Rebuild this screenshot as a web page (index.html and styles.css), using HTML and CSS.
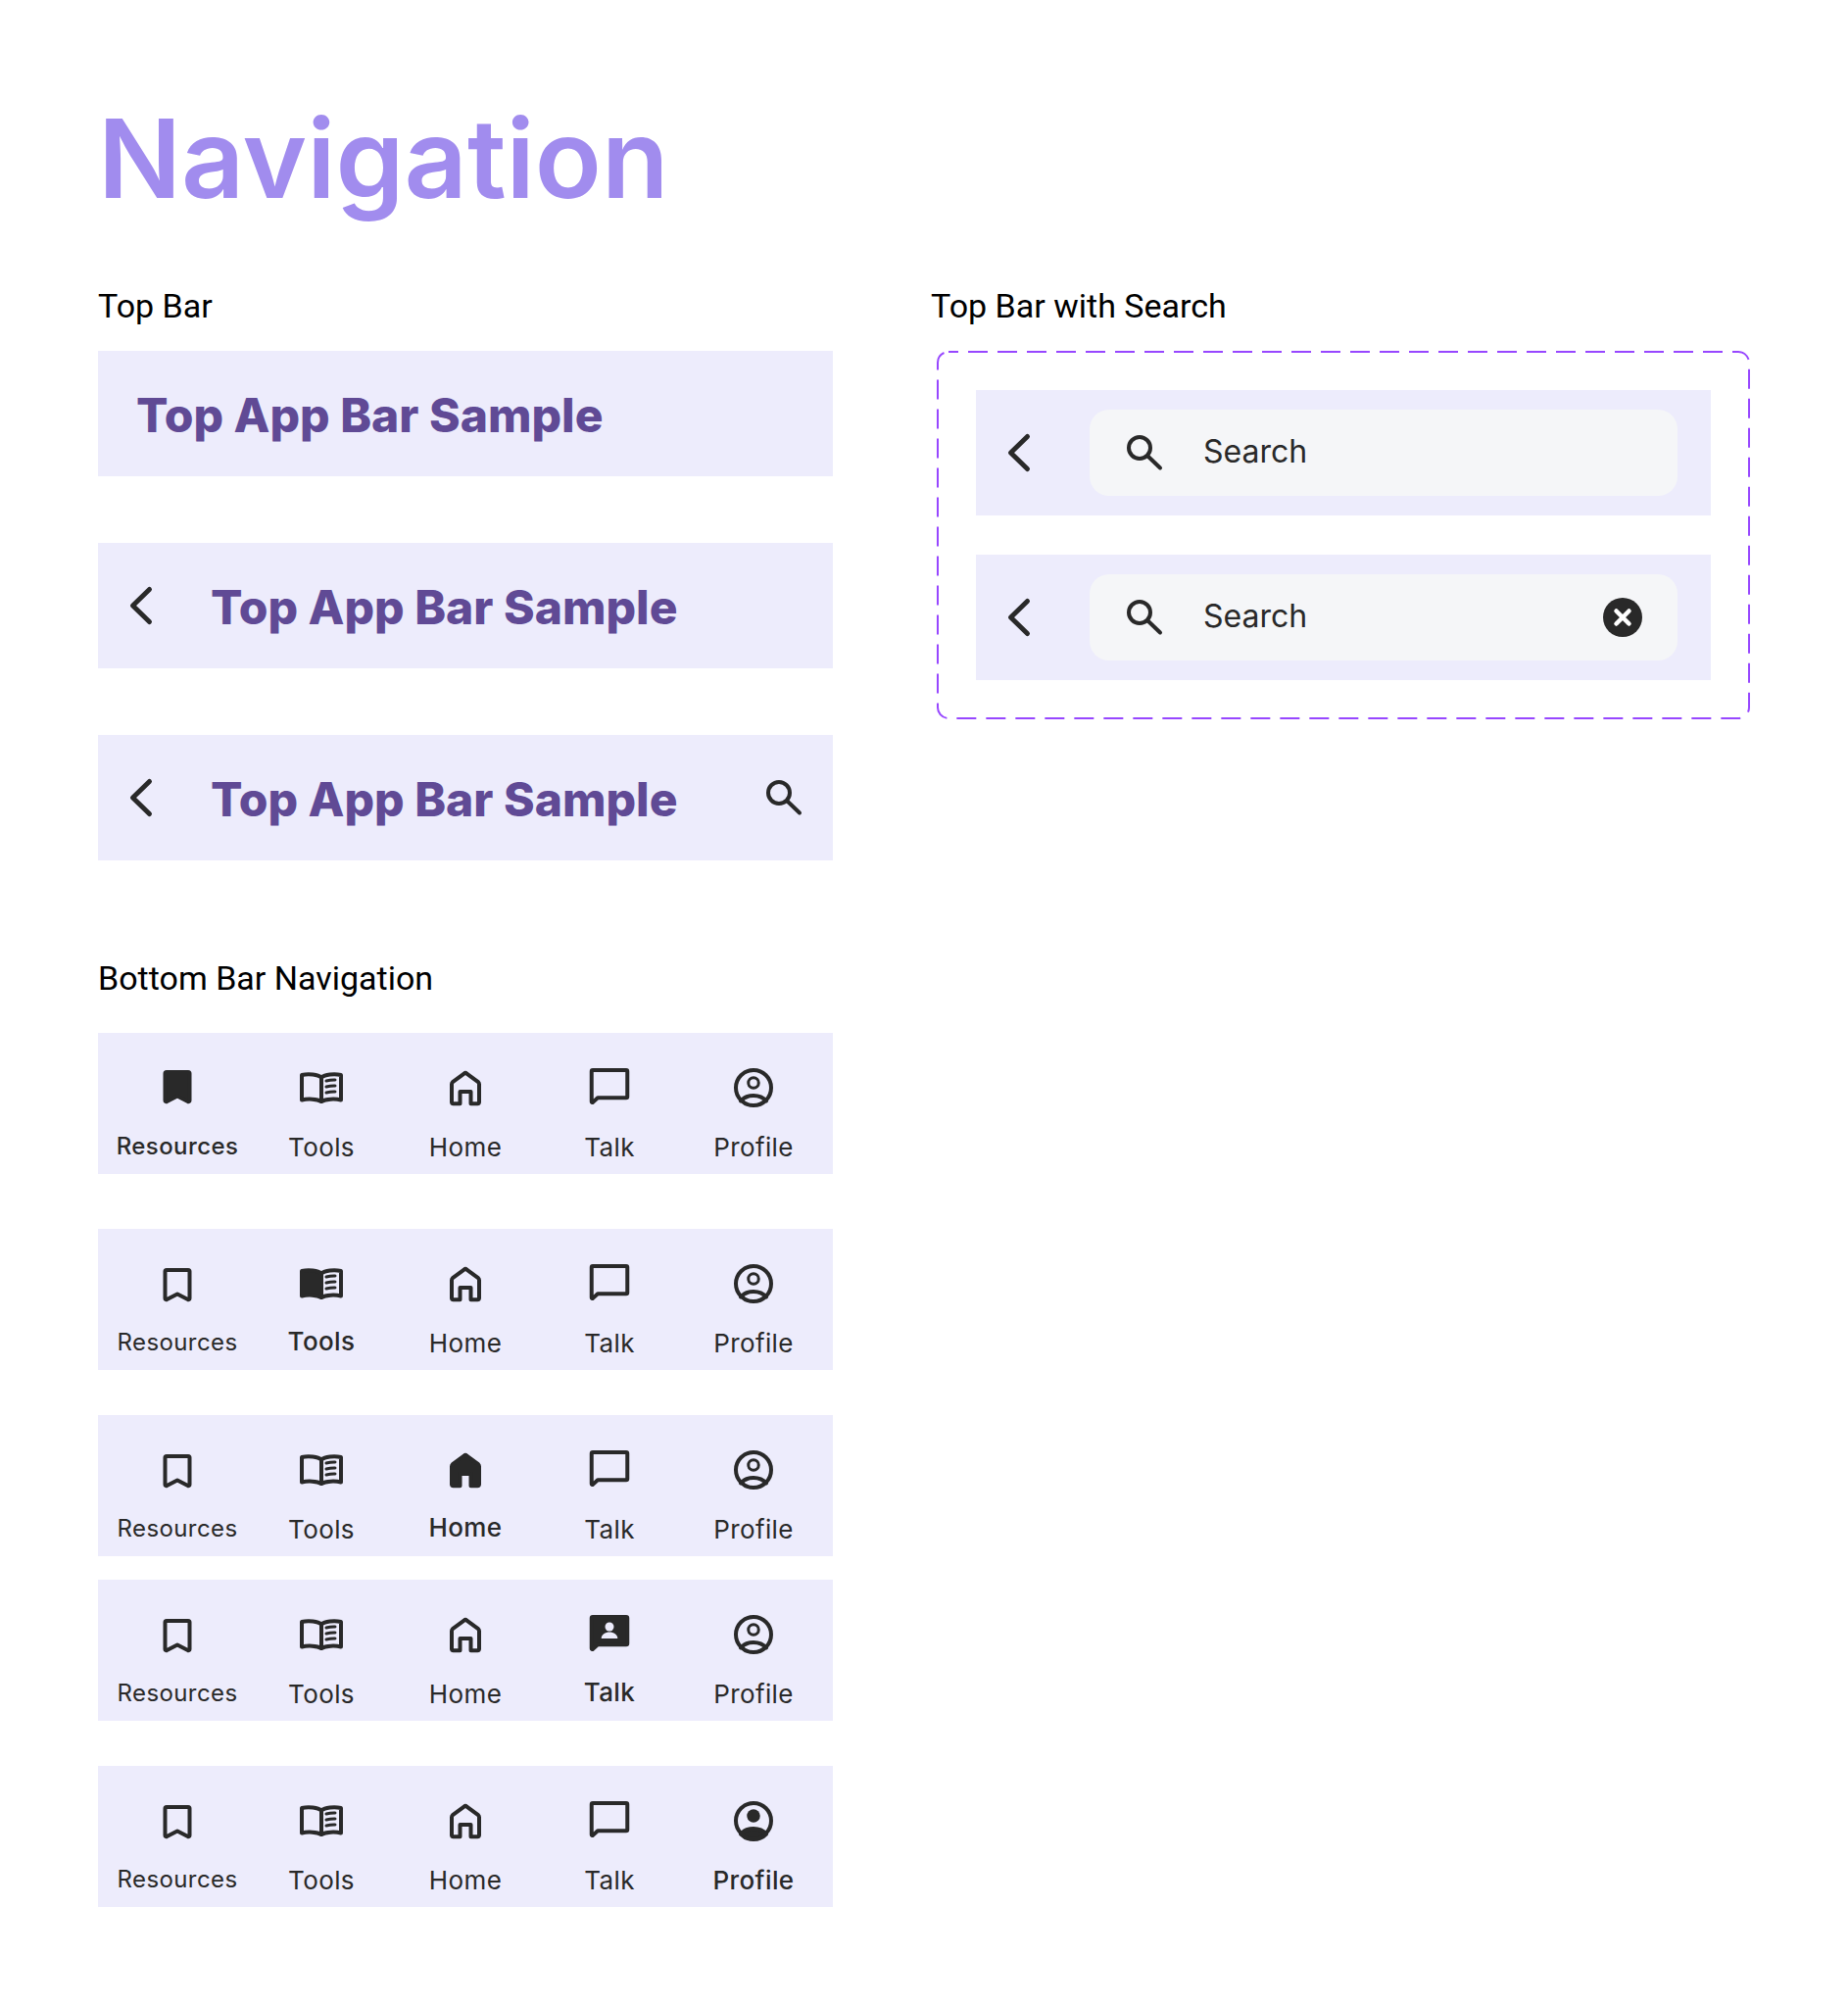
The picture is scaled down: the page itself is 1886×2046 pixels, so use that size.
FILE: index.html
```html
<!DOCTYPE html>
<html lang="en">
<head>
  <meta charset="UTF-8">
  <meta name="viewport" content="width=device-width, initial-scale=1.0">
  <title>Navigation</title>
  <link rel="stylesheet" href="styles.css">
</head>
<body>
  <svg class="sprites" aria-hidden="true">
    <symbol id="back" viewBox="0 0 48 48">
      <path class="line-thick" d="M32.5 7.5 15.5 24l17 16.5"/>
    </symbol>
    <symbol id="search" viewBox="0 0 48 48">
      <circle class="line" cx="19" cy="19" r="11"/>
      <path class="line" d="M27.5 27.5 40 39.5"/>
    </symbol>
    <symbol id="clear" viewBox="0 0 48 48">
      <circle class="solid" cx="24" cy="24" r="20"/>
      <path class="line-white" d="m17.500 17.500 13 13m0-13-13 13"/>
    </symbol>
    <symbol id="bookmark" viewBox="0 0 48 48">
      <path class="line" d="M13 10h22c.8 0 1.500.7 1.500 1.500V39c0 1-1 1.500-1.800 1L24 34.500 13.300 40c-.8.5-1.800 0-1.800-1V11.500c0-.8.7-1.500 1.500-1.500z"/>
    </symbol>
    <symbol id="bookmark-on" viewBox="0 0 48 48">
      <path class="line solid" d="M13 8h22c.8 0 1.500.7 1.500 1.500V37c0 1-1 1.500-1.800 1L24 32.500 13.300 38c-.8.5-1.800 0-1.800-1V9.500c0-.8.7-1.500 1.500-1.500z"/>
    </symbol>
    <symbol id="book" viewBox="0 0 48 48">
      <path class="line" d="M24 13.500C20.500 10.500 11 9.500 4 11v25.500c6-1.500 15.500-1.200 20 1.500"/>
      <path class="line" d="M24 13.500c3.500-3 13-4 20-2.500v25.500c-6-1.500-15.500-1.200-20 1.500z"/>
      <path class="line-thin" d="M29 17c3-.8 6-1.100 9-1M29 23c3-.8 6-1.100 9-1M29 29c3-.8 6-1.100 9-1"/>
    </symbol>
    <symbol id="book-on" viewBox="0 0 48 48">
      <path class="line solid" d="M24 13.500C20.500 10.500 11 9.500 4 11v25.500c6-1.500 15.500-1.200 20 1.500z"/>
      <path class="line" d="M24 13.500c3.500-3 13-4 20-2.500v25.500c-6-1.500-15.500-1.200-20 1.500z"/>
      <path class="line-thin" d="M29 17c3-.8 6-1.100 9-1M29 23c3-.8 6-1.100 9-1M29 29c3-.8 6-1.100 9-1"/>
    </symbol>
    <symbol id="home" viewBox="0 0 48 48">
      <path class="line" d="M10 38.500v-18c0-1 .4-1.700 1-2.300L22.600 9.600a2 2 0 0 1 2.800 0L37 18.200c.6.6 1 1.300 1 2.300v18c0 1-.8 1.700-1.700 1.700H29.500V28h-11v12.200h-6.800c-.9 0-1.700-.7-1.700-1.700z"/>
    </symbol>
    <symbol id="home-on" viewBox="0 0 48 48">
      <path class="line solid" d="M10 38.500v-18c0-1 .4-1.700 1-2.300L22.600 9.600a2 2 0 0 1 2.800 0L37 18.200c.6.6 1 1.300 1 2.300v18c0 1-.8 1.700-1.700 1.700H29.500V28h-11v12.200h-6.800c-.9 0-1.700-.7-1.700-1.700z"/>
    </symbol>
    <symbol id="talk" viewBox="0 0 48 48">
      <path class="line" d="M7 6h34c.7 0 1.250.55 1.250 1.250V33c0 .7-.55 1.250-1.250 1.250H12l-5 4.600c-.5.4-1.250.1-1.250-.6V7.250C5.750 6.550 6.300 6 7 6z"/>
    </symbol>
    <symbol id="talk-on" viewBox="0 0 48 48">
      <path class="line solid" d="M7 6h34c.7 0 1.250.55 1.250 1.250V33c0 .7-.55 1.250-1.250 1.250H12l-5 4.600c-.5.4-1.250.1-1.250-.6V7.250C5.750 6.550 6.300 6 7 6z"/>
      <circle class="tint" cx="24" cy="16" r="4.500"/>
      <path class="tint" d="M15.700 28c0-4 4-6.500 8.300-6.500s8.300 2.500 8.300 6.500z"/>
    </symbol>
    <symbol id="profile" viewBox="0 0 48 48">
      <circle class="line" cx="24" cy="24" r="18"/>
      <circle class="line-thin" cx="24" cy="19" r="5.250"/>
      <path class="line" d="M11 37.500c3-3.500 8-5.500 13-5.500s10 2 13 5.500"/>
    </symbol>
    <symbol id="profile-on" viewBox="0 0 48 48">
      <circle class="line" cx="24" cy="24" r="18"/>
      <circle class="solid" cx="24" cy="19" r="6.750"/>
      <path class="line solid" d="M11 37.500c3-3.500 8-5.500 13-5.500s10 2 13 5.500A18 18 0 0 1 11 37.500z"/>
    </symbol>
  </svg>

  <div class="page">
    <h1 class="page-title">Navigation</h1>

    <div class="columns">
      <div class="column">
        <h2 class="section-title">Top Bar</h2>
        <div class="top-bars">
          <div class="top-bar top-bar-plain">
            <span class="top-bar-title">Top App Bar Sample</span>
          </div>
          <div class="top-bar">
            <svg class="icon"><use href="#back"/></svg>
            <span class="top-bar-title">Top App Bar Sample</span>
          </div>
          <div class="top-bar">
            <svg class="icon"><use href="#back"/></svg>
            <span class="top-bar-title">Top App Bar Sample</span>
            <svg class="icon top-bar-action"><use href="#search"/></svg>
          </div>
        </div>

        <h2 class="section-title section-title-nav">Bottom Bar Navigation</h2>

        <div class="bottom-bar">
          <div class="nav-item"><svg class="icon"><use href="#bookmark-on"/></svg><span class="nav-label nav-label-small active">Resources</span></div>
          <div class="nav-item"><svg class="icon"><use href="#book"/></svg><span class="nav-label">Tools</span></div>
          <div class="nav-item"><svg class="icon"><use href="#home"/></svg><span class="nav-label">Home</span></div>
          <div class="nav-item"><svg class="icon"><use href="#talk"/></svg><span class="nav-label">Talk</span></div>
          <div class="nav-item"><svg class="icon"><use href="#profile"/></svg><span class="nav-label">Profile</span></div>
        </div>

        <div class="bottom-bar gap-56">
          <div class="nav-item"><svg class="icon"><use href="#bookmark"/></svg><span class="nav-label nav-label-small">Resources</span></div>
          <div class="nav-item"><svg class="icon"><use href="#book-on"/></svg><span class="nav-label active raised">Tools</span></div>
          <div class="nav-item"><svg class="icon"><use href="#home"/></svg><span class="nav-label">Home</span></div>
          <div class="nav-item"><svg class="icon"><use href="#talk"/></svg><span class="nav-label">Talk</span></div>
          <div class="nav-item"><svg class="icon"><use href="#profile"/></svg><span class="nav-label">Profile</span></div>
        </div>

        <div class="bottom-bar gap-46">
          <div class="nav-item"><svg class="icon"><use href="#bookmark"/></svg><span class="nav-label nav-label-small">Resources</span></div>
          <div class="nav-item"><svg class="icon"><use href="#book"/></svg><span class="nav-label">Tools</span></div>
          <div class="nav-item"><svg class="icon"><use href="#home-on"/></svg><span class="nav-label active raised">Home</span></div>
          <div class="nav-item"><svg class="icon"><use href="#talk"/></svg><span class="nav-label">Talk</span></div>
          <div class="nav-item"><svg class="icon"><use href="#profile"/></svg><span class="nav-label">Profile</span></div>
        </div>

        <div class="bottom-bar gap-24">
          <div class="nav-item"><svg class="icon"><use href="#bookmark"/></svg><span class="nav-label nav-label-small">Resources</span></div>
          <div class="nav-item"><svg class="icon"><use href="#book"/></svg><span class="nav-label">Tools</span></div>
          <div class="nav-item"><svg class="icon"><use href="#home"/></svg><span class="nav-label">Home</span></div>
          <div class="nav-item"><svg class="icon"><use href="#talk-on"/></svg><span class="nav-label active raised">Talk</span></div>
          <div class="nav-item"><svg class="icon"><use href="#profile"/></svg><span class="nav-label">Profile</span></div>
        </div>

        <div class="bottom-bar gap-46">
          <div class="nav-item"><svg class="icon"><use href="#bookmark"/></svg><span class="nav-label nav-label-small">Resources</span></div>
          <div class="nav-item"><svg class="icon"><use href="#book"/></svg><span class="nav-label">Tools</span></div>
          <div class="nav-item"><svg class="icon"><use href="#home"/></svg><span class="nav-label">Home</span></div>
          <div class="nav-item"><svg class="icon"><use href="#talk"/></svg><span class="nav-label">Talk</span></div>
          <div class="nav-item"><svg class="icon"><use href="#profile-on"/></svg><span class="nav-label active">Profile</span></div>
        </div>
      </div>

      <div class="column">
        <h2 class="section-title">Top Bar with Search</h2>
        <div class="search-frame">
          <svg class="frame-outline" viewBox="0 0 830 376">
            <rect x="1" y="1" width="828" height="374" rx="11"/>
          </svg>
          <div class="top-bar">
            <svg class="icon"><use href="#back"/></svg>
            <div class="search-field">
              <svg class="icon"><use href="#search"/></svg>
              <span class="search-text">Search</span>
            </div>
          </div>
          <div class="top-bar">
            <svg class="icon"><use href="#back"/></svg>
            <div class="search-field">
              <svg class="icon"><use href="#search"/></svg>
              <span class="search-text">Search</span>
              <svg class="icon search-clear"><use href="#clear"/></svg>
            </div>
          </div>
        </div>
      </div>
    </div>
  </div>
</body>
</html>
```

FILE: styles.css
```css
/* Basic styles */
body {
  margin: 0;
  padding: 0;
  background-color: #fff;
  color: #292929;
  font-family: Inter, "Liberation Sans", sans-serif;
}
.sprites {
  display: none;
}
.page {
  padding: 93px 0 100px 100px;
}
.page-title {
  margin: 0 0 63px;
  font-size: 112px;
  line-height: 136px;
  font-weight: 600;
  color: #a18cee;
}
.columns {
  display: flex;
  gap: 100px;
}
.column {
  width: 750px;
}
.section-title {
  margin: 0 0 26px;
  font-family: Roboto, sans-serif;
  font-size: 34px;
  line-height: 40px;
  font-weight: 400;
  color: #000;
}
.section-title-nav {
  margin: 100px 0 36px;
}

/* Top bars */
.top-bars {
  display: flex;
  flex-direction: column;
  gap: 68px;
}
.top-bar {
  display: flex;
  align-items: center;
  height: 128px;
  padding: 0 0 0 20px;
  background-color: #edecfc;
}
.top-bar-plain {
  padding-left: 39px;
}
.top-bar-title {
  margin-top: 2px;
  font-size: 48px;
  font-weight: 800;
  color: #604a95;
}
.top-bar .icon + .top-bar-title {
  margin-left: 47px;
}
.top-bar-action {
  margin-left: auto;
  margin-right: 26px;
}
.icon {
  flex: none;
  width: 48px;
  height: 48px;
}

/* Search */
.search-frame {
  position: relative;
  display: flex;
  flex-direction: column;
  gap: 40px;
  width: 750px;
  margin-left: 6px;
  padding: 40px;
}
.frame-outline {
  position: absolute;
  top: 0;
  left: 0;
  width: 830px;
  height: 376px;
}
.frame-outline rect {
  fill: none;
  stroke: #9747ff;
  stroke-width: 2;
  stroke-dasharray: 20 10;
  stroke-dashoffset: 10;
}
.search-field {
  display: flex;
  align-items: center;
  width: 600px;
  height: 88px;
  margin-left: 48px;
  padding: 0 32px;
  box-sizing: border-box;
  border-radius: 20px;
  background-color: #f5f6f8;
}
.search-text {
  margin-left: 36px;
  padding-bottom: 4px;
  font-size: 32px;
}
.search-clear {
  margin-left: auto;
}

/* Bottom bars */
.bottom-bar {
  display: flex;
  height: 144px;
  padding: 32px 7.5px 0;
  box-sizing: border-box;
  background-color: #edecfc;
}
.gap-24 {
  margin-top: 24px;
}
.gap-46 {
  margin-top: 46px;
}
.gap-56 {
  margin-top: 56px;
}
.nav-item {
  display: flex;
  flex: 1;
  flex-direction: column;
  align-items: center;
}
.nav-label {
  margin-top: 21px;
  font-size: 26px;
  line-height: 32px;
  letter-spacing: 0.4px;
}
.nav-label-small {
  margin-top: 20px;
  font-size: 24px;
}
.raised {
  margin-top: 19px;
}
.active {
  font-weight: 500;
}

/* Icon strokes */
.line,
.line-thin,
.line-thick,
.line-white {
  fill: none;
  stroke: #292929;
  stroke-width: 4;
  stroke-linecap: round;
  stroke-linejoin: round;
}
.line-thin {
  stroke-width: 3;
}
.line-thick {
  stroke-width: 5;
}
.line-white {
  stroke: #fff;
  stroke-width: 4.500;
}
.solid {
  fill: #292929;
}
.tint {
  fill: #edecfc;
}
```
